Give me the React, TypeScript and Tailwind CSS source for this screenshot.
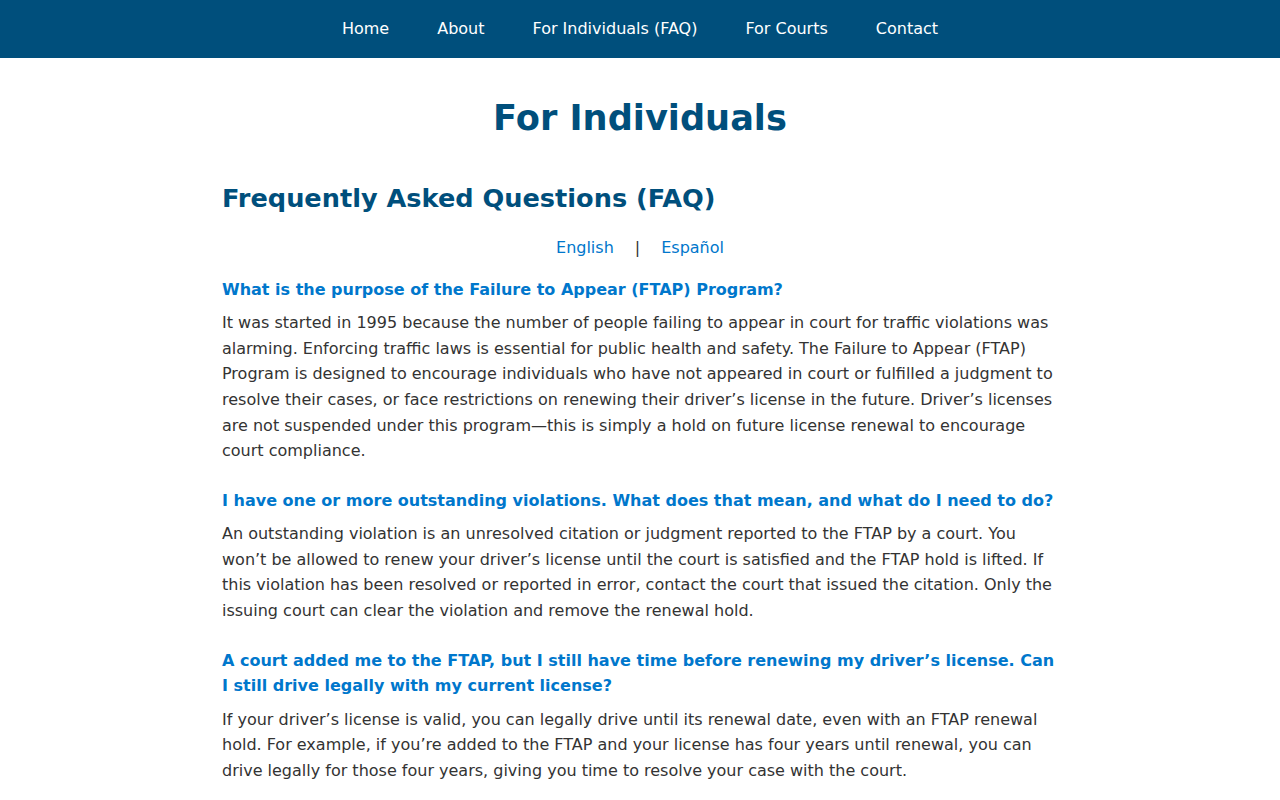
const navLinks = ['Home', 'About', 'For Individuals (FAQ)', 'For Courts', 'Contact'];

const faqs = [
  {
    q: 'What is the purpose of the Failure to Appear (FTAP) Program?',
    a: 'It was started in 1995 because the number of people failing to appear in court for traffic violations was alarming. Enforcing traffic laws is essential for public health and safety. The Failure to Appear (FTAP) Program is designed to encourage individuals who have not appeared in court or fulfilled a judgment to resolve their cases, or face restrictions on renewing their driver’s license in the future. Driver’s licenses are not suspended under this program—this is simply a hold on future license renewal to encourage court compliance.',
  },
  {
    q: 'I have one or more outstanding violations. What does that mean, and what do I need to do?',
    a: 'An outstanding violation is an unresolved citation or judgment reported to the FTAP by a court. You won’t be allowed to renew your driver’s license until the court is satisfied and the FTAP hold is lifted. If this violation has been resolved or reported in error, contact the court that issued the citation. Only the issuing court can clear the violation and remove the renewal hold.',
  },
  {
    q: 'A court added me to the FTAP, but I still have time before renewing my driver’s license. Can I still drive legally with my current license?',
    a: 'If your driver’s license is valid, you can legally drive until its renewal date, even with an FTAP renewal hold. For example, if you’re added to the FTAP and your license has four years until renewal, you can drive legally for those four years, giving you time to resolve your case with the court.',
  },
];

export default function App() {
  return (
    <div className="min-h-screen bg-white font-['DejaVu_Sans',sans-serif] text-[#333333]">
      <nav className="h-[58px] bg-[#004f7c] flex items-center justify-center">
        {navLinks.map((l) => (
          <a key={l} href="#" className="px-6 text-base text-white leading-[58px]">
            {l}
          </a>
        ))}
      </nav>

      <main className="max-w-[836px] mx-auto pb-10">
        <h1 className="mt-[39px] text-center text-[35.2px] leading-[1.2] font-bold text-[#004f7c]">For Individuals</h1>

        <h2 className="mt-[44px] text-[25.6px] leading-[1.2] font-bold text-[#004f7c]">Frequently Asked Questions (FAQ)</h2>

        <div className="mt-[21px] flex justify-center gap-[21px] text-base leading-[1.6]">
          <a href="#" className="text-[#0077cc]">English</a>
          <span>|</span>
          <a href="#" className="text-[#0077cc]">Español</a>
        </div>

        <div className="mt-4">
          {faqs.map((f) => (
            <section key={f.q} className="mb-6">
              <h3 className="text-base leading-[1.6] font-bold text-[#0077cc] mb-2">{f.q}</h3>
              <p className="text-base leading-[1.6]">{f.a}</p>
            </section>
          ))}
        </div>
      </main>
    </div>
  );
}
